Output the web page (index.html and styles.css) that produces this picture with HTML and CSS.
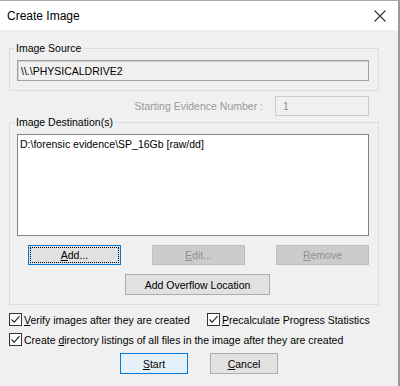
FILE: index.html
```html
<!DOCTYPE html>
<html lang="en">
<head>
    <meta charset="UTF-8">
    <title>Create Image</title>
    <link rel="stylesheet" href="styles.css">
</head>
<body>
    <div class="window">
        <div class="titlebar">
            <span class="title">Create Image</span>
            <svg class="close" width="12" height="12" viewBox="0 0 12 12">
                <path d="M0.5 0.5 L11.5 11.5 M11.5 0.5 L0.5 11.5" stroke="#333" stroke-width="1.1" fill="none"/>
            </svg>
        </div>

        <div class="content">
            <fieldset class="group source">
                <legend>Image Source</legend>
                <div class="field readonly">\\.\PHYSICALDRIVE2</div>
            </fieldset>

            <div class="evidence-row">
                <span class="disabled-text">Starting Evidence Number :</span>
                <div class="field small disabled">1</div>
            </div>

            <fieldset class="group dest">
                <legend>Image Destination(s)</legend>
                <div class="listbox">
                    <div class="list-item">D:\forensic evidence\SP_16Gb [raw/dd]</div>
                </div>
                <div class="btn-row">
                    <button class="btn focused"><u>A</u>dd...</button>
                    <button class="btn" disabled><u>E</u>dit...</button>
                    <button class="btn" disabled><u>R</u>emove</button>
                </div>
                <div class="overflow-row">
                    <button class="btn wide">Add Overflow Location</button>
                </div>
            </fieldset>

            <div class="checks">
                <div class="check-row">
                    <label class="check first">
                        <span class="box"><svg width="11" height="11" viewBox="0 0 11 11"><path d="M1.5 5.5 L4.2 8.2 L9.5 2.2" stroke="#222" stroke-width="1.1" fill="none"/></svg></span>
                        <span><u>V</u>erify images after they are created</span>
                    </label>
                    <label class="check">
                        <span class="box"><svg width="11" height="11" viewBox="0 0 11 11"><path d="M1.5 5.5 L4.2 8.2 L9.5 2.2" stroke="#222" stroke-width="1.1" fill="none"/></svg></span>
                        <span><u>P</u>recalculate Progress Statistics</span>
                    </label>
                </div>
                <div class="check-row">
                    <label class="check">
                        <span class="box"><svg width="11" height="11" viewBox="0 0 11 11"><path d="M1.5 5.5 L4.2 8.2 L9.5 2.2" stroke="#222" stroke-width="1.1" fill="none"/></svg></span>
                        <span>Create <u>d</u>irectory listings of all files in the image after they are created</span>
                    </label>
                </div>
            </div>

            <div class="actions">
                <button class="btn default"><u>S</u>tart</button>
                <button class="btn cancel"><u>C</u>ancel</button>
            </div>
        </div>
    </div>
</body>
</html>
```

FILE: styles.css
```css
body {
    margin: 0;
    font-family: "Liberation Sans", Arial, sans-serif;
    font-size: 10.5px;
    color: #000;
    background: #f0f0f0;
}

.window {
    width: 398px;
    height: 385px;
    border-top: 1px solid #aaa;
    border-right: 2px solid #9a9a9a;
    background: #f0f0f0;
}

.titlebar {
    height: 29px;
    background: #fff;
    display: flex;
    align-items: center;
    justify-content: space-between;
    padding: 0 12px 0 7px;
}

.title {
    font-size: 12px;
}

.content {
    padding: 12px 19px 0 9px;
}

.group {
    margin: 0;
    border: 1px solid #dcdcdc;
    padding: 5px 9px 9px 7px;
}

.group legend {
    margin-left: -3px;
    padding: 0 2px;
    line-height: 13px;
}

.field {
    box-sizing: border-box;
    height: 21px;
    padding: 0 3px;
    display: flex;
    align-items: center;
}

.field.readonly {
    border: 1px solid #a0a0a0;
    box-shadow: inset 1px 1px 0 #d4d4d4;
    background: #f0f0f0;
}

.field.small {
    width: 94px;
    height: 20px;
    padding: 0 7px;
}

.field.disabled {
    border: 1px solid #ccc;
    color: #8d8d8d;
}

.evidence-row {
    display: flex;
    justify-content: flex-end;
    align-items: center;
    gap: 12px;
    margin-top: 5px;
    padding-right: 10px;
}

.disabled-text {
    color: #9a9a9a;
}

.listbox {
    box-sizing: border-box;
    height: 102px;
    background: #fff;
    border: 1px solid #828282;
    padding: 3px 2px;
}

.btn {
    box-sizing: border-box;
    height: 20px;
    width: 93px;
    font-family: inherit;
    font-size: 10.5px;
    color: #000;
    background: #e1e1e1;
    border: 1px solid #adadad;
    padding: 0;
}

.btn:disabled {
    background: #cccccc;
    border-color: #bfbfbf;
    color: #8f8f8f;
}

.btn.focused {
    border-color: #0078d7;
    outline: 1px dotted #000;
    outline-offset: -3px;
}

.btn-row {
    display: flex;
    gap: 31px;
    margin-top: 9px;
    padding-left: 11px;
}

.overflow-row {
    margin-top: 9px;
    padding-left: 108px;
}

.btn.wide {
    width: 145px;
    height: 21px;
}

.checks {
    margin-top: 8px;
    display: flex;
    flex-direction: column;
    gap: 7px;
}

.check-row {
    display: flex;
}

.check {
    display: flex;
    align-items: center;
    height: 13px;
}

.check.first {
    width: 198px;
}

.box {
    box-sizing: border-box;
    width: 13px;
    height: 13px;
    border: 1px solid #333;
    background: #fff;
    margin-right: 2px;
    display: flex;
    align-items: center;
    justify-content: center;
}

.actions {
    display: flex;
    gap: 22px;
    margin-top: 7px;
    padding-left: 111px;
}

.actions .btn {
    width: 68px;
    height: 21px;
}

.btn.default {
    background: #e5f1fb;
    border-color: #0078d7;
}
```
